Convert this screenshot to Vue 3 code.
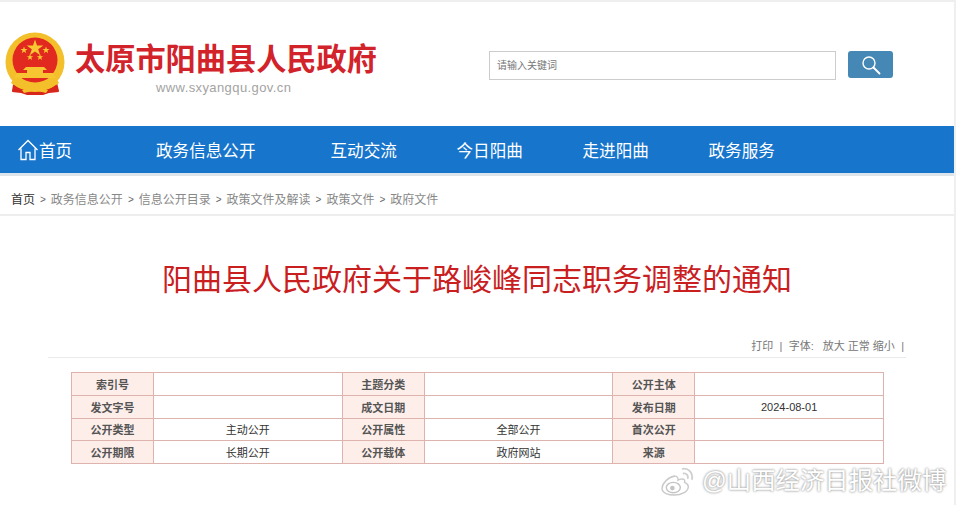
<script setup>
const navItems = [
  { text: '政务信息公开', width: 174.500 },
  { text: '互动交流', width: 126 },
  { text: '今日阳曲', width: 126 },
  { text: '走进阳曲', width: 126 },
  { text: '政务服务', width: 126 }
]
const crumbs = ['政务信息公开', '信息公开目录', '政策文件及解读', '政策文件', '政府文件']
const rows = [
  ['索引号', '', '主题分类', '', '公开主体', ''],
  ['发文字号', '', '成文日期', '', '发布日期', '2024-08-01'],
  ['公开类型', '主动公开', '公开属性', '全部公开', '首次公开', ''],
  ['公开期限', '长期公开', '公开载体', '政府网站', '来源', '']
]
</script>

<template>
  <div class="page">
    <header class="header">
      <div class="brand">
        <svg class="emblem" viewBox="0 0 60 64" width="60" height="64" aria-hidden="true">
          <path d="M9 46 L7 59 L16 60 L22 62 L38 62 L44 60 L54 59 L51 46 Z" fill="#d9261c" />
          <circle cx="30" cy="30" r="29.500" fill="#f3bf2b" />
          <circle cx="30" cy="28" r="22.500" fill="#e2291f" />
          <path d="M30 7.500l2 6h6.300l-5.100 3.700 2 6-5.200-3.700-5.200 3.700 2-6-5.100-3.700h6.300z" fill="#f8c933" />
          <path d="M19 14.500l.9 2.500h2.700l-2.200 1.600.8 2.600-2.200-1.600-2.200 1.600.8-2.600-2.200-1.600h2.700z" fill="#f8c933" />
          <path d="M41 14.500l.9 2.500h2.700l-2.200 1.600.8 2.600-2.200-1.600-2.200 1.600.8-2.600-2.200-1.600h2.700z" fill="#f8c933" />
          <path d="M25 22l.8 2.200h2.400l-1.900 1.400.7 2.300-2-1.400-2 1.400.7-2.300-1.900-1.400h2.400z" fill="#f8c933" />
          <path d="M35 22l.8 2.200h2.400l-1.900 1.400.7 2.300-2-1.400-2 1.400.7-2.300-1.900-1.400h2.400z" fill="#f8c933" />
          <path d="M21 35h18l3 3H18z" fill="#f6c531" />
          <path d="M22 38h16v3H22z" fill="#f6c531" />
          <path d="M12 41h36l3 5H9z" fill="#f6c531" />
          <path d="M9 46 Q18 56 30 55 Q42 56 51 46 L54 51 Q44 60 30 59 Q16 60 6 51 Z" fill="#f3bf2b" />
          <path d="M9 53 L7 60 L16 61 L22 63 L38 63 L44 61 L54 60 L51 53 Q42 60 30 59 Q18 60 9 53 Z" fill="#d9261c" />
          <path d="M17 58 Q24 55 30 57 Q36 55 43 58 L41 61 Q35 59 30 60 Q25 59 19 61 Z" fill="#f5c02c" />
        </svg>
        <div class="brand-text">
          <div class="brand-name">太原市阳曲县人民政府</div>
          <div class="brand-url">www.sxyangqu.gov.cn</div>
        </div>
      </div>
      <div class="search">
        <div class="search-input">请输入关键词</div>
        <button class="search-btn" type="button" aria-label="搜索">
          <svg viewBox="0 0 20 20" width="20" height="20" aria-hidden="true">
            <circle cx="8" cy="8" r="6" fill="none" stroke="#fff" stroke-width="1.400" />
            <path d="M12.500 12.500L18.500 18.500" stroke="#fff" stroke-width="1.800" stroke-linecap="round" />
          </svg>
        </button>
      </div>
    </header>

    <nav class="nav">
      <a class="nav-home">
        <svg viewBox="0 0 22 22" width="22" height="22" aria-hidden="true">
          <path d="M1.500 11L11 1.500 20.500 11M4 9.500V20.500H9V13.500H13V20.500H18V9.500" fill="none" stroke="#fff" stroke-width="1.300" />
        </svg>
        <span>首页</span>
      </a>
      <a v-for="item in navItems" :key="item.text" class="nav-item" :style="{ width: item.width + 'px' }">{{ item.text }}</a>
    </nav>
    <div class="nav-shadow"></div>

    <div class="crumbs">
      <span class="crumb-home">首页</span>
      <template v-for="c in crumbs" :key="c">
        <span class="crumb-sep">&gt;</span><span class="crumb">{{ c }}</span>
      </template>
    </div>

    <main class="article">
      <h1 class="title">阳曲县人民政府关于路峻峰同志职务调整的通知</h1>
      <div class="tools">
        <span>打印</span><span class="bar">|</span><span>字体:</span>
        <span class="sizes">放大 正常 缩小</span><span class="bar last">|</span>
      </div>
      <table class="meta">
        <colgroup>
          <col class="c-label" /><col class="c-value" />
          <col class="c-label" /><col class="c-value" />
          <col class="c-label" /><col class="c-value" />
        </colgroup>
        <tbody>
          <tr v-for="(row, r) in rows" :key="r">
            <td v-for="(cell, i) in row" :key="i" :class="i % 2 === 0 ? 'label' : 'value'">{{ cell }}</td>
          </tr>
        </tbody>
      </table>
    </main>

    <div class="watermark">
      <svg viewBox="0 0 36 32" width="36" height="30" aria-hidden="true">
        <path d="M14 11C7 12 1 19 1 24c0 5 7 7 13 7 8 0 15-4 15-9 0-3-3-4-4-4.500 1-3-1-4-4-3.500-2 .5-3 1-3 1s1-4-4-4.500z" fill="#fff" stroke="#c9c9c9" stroke-width="1.500" />
        <ellipse cx="13" cy="23" rx="7.500" ry="5.500" fill="#fff" stroke="#c4c4c4" stroke-width="1.500" />
        <circle cx="12" cy="23.500" r="2.500" fill="#c4c4c4" />
        <path d="M23 3c6-1 11 4 10 11M24 8c3-.5 5 2 4.500 5" fill="none" stroke="#d0d0d0" stroke-width="2" stroke-linecap="round" />
      </svg>
      <span>@山西经济日报社微博</span>
    </div>
  </div>
</template>

<style>
html, body { margin: 0; background: #fff; }
</style>

<style scoped>
.page {
  position: relative;
  width: 956px;
  height: 505px;
  overflow: hidden;
  background: #fff;
  box-sizing: border-box;
  border-top: 2px solid #efefef;
  border-right: 2px solid #efefef;
  font-family: "Liberation Sans", "Noto Sans CJK SC", sans-serif;
  color: #333;
}
.header {
  height: 124px;
  display: flex;
  box-sizing: border-box;
}
.brand {
  width: 489px;
  display: flex;
  align-items: flex-start;
  padding: 30px 0 0 5px;
  box-sizing: border-box;
}
.emblem { flex: none; }
.brand-text { margin-left: 10px; padding-top: 10px; }
.brand-name {
  font-family: "Liberation Serif", "Noto Sans CJK SC", serif;
  font-size: 30.200px;
  line-height: 36px;
  font-weight: 700;
  color: #d2232a;
  white-space: nowrap;
}
.brand-url {
  margin: 2px 0 0 81px;
  font-size: 13px;
  line-height: 15px;
  letter-spacing: .4px;
  color: #a3a3a3;
  white-space: nowrap;
}
.search { display: flex; padding-top: 49px; align-items: flex-start; }
.search-input {
  height: 27px;
  width: 338px;
  border: 1px solid #cccccc;
  padding-left: 7px;
  font-size: 10px;
  line-height: 27px;
  color: #777;
}
.search-btn {
  margin-left: 12px;
  width: 45px;
  height: 27px;
  padding: 0;
  border: 0;
  border-radius: 3px;
  background: #4588b5;
  display: flex;
  align-items: center;
  justify-content: center;
}
.nav {
  height: 47px;
  display: flex;
  align-items: center;
  background: #1875cc;
  color: #fff;
  font-size: 16.600px;
}
.nav-home {
  width: 156px;
  display: flex;
  align-items: center;
  padding-left: 17px;
  box-sizing: border-box;
}
.nav-home svg { flex: none; }
.nav-item { display: block; white-space: nowrap; }
.nav-shadow { height: 3px; background: #dde4ea; }
.crumbs {
  height: 40px;
  padding: 9px 0 0 11px;
  box-sizing: border-box;
  border-bottom: 2px solid #eeeeee;
  display: flex;
  align-items: center;
  font-size: 12px;
  line-height: 24px;
  color: #888;
}
.crumb-home { color: #333; }
.crumb-sep { margin: 0 5px; font-size: 10px; color: #666; }
.article {
  padding: 0 48px;
  width: 858px;
  box-sizing: content-box;
}
.title {
  margin: 0;
  padding-top: 44px;
  font-size: 30px;
  line-height: 40px;
  font-weight: 400;
  color: #c9201f;
  text-align: center;
  white-space: nowrap;
}
.tools {
  margin-top: 38px;
  height: 20px;
  box-sizing: border-box;
  padding-right: 2px;
  border-bottom: 1px solid #eaeaea;
  display: flex;
  justify-content: flex-end;
  font-size: 11px;
  line-height: 16px;
  color: #777;
}
.bar { margin: 0 6.300px; }
.bar.last { margin-right: 0; }
.sizes { margin-left: 9px; }
.meta {
  margin: 14px 0 0 23px;
  width: 812px;
  table-layout: fixed;
  border-collapse: collapse;
  font-size: 11px;
  color: #333;
}
.c-label { width: 82px; }
.c-value { width: 188.670px; }
.meta td {
  height: 22.750px;
  padding: 0;
  border: 1px solid #deb3ae;
  text-align: center;
  box-sizing: border-box;
}
.meta .label { background: #fdeeea; font-weight: 700; color: #555; }
.watermark {
  position: absolute;
  left: 660px;
  top: 464px;
  display: flex;
  align-items: center;
  gap: 6px;
  font-size: 24.400px;
  line-height: 30px;
  color: #fff;
  white-space: nowrap;
  text-shadow: 0 0 2px #9a9a9a, 0 0 3px #b0b0b0;
}
</style>
